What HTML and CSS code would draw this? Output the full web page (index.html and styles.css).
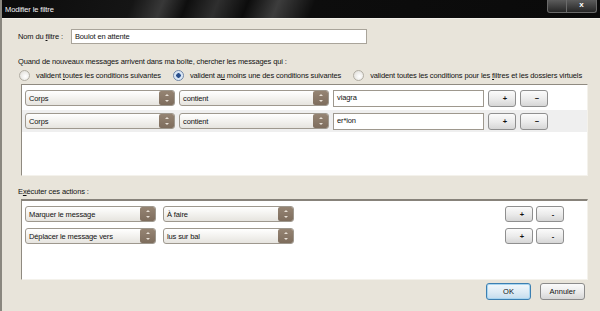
FILE: index.html
```html
<!DOCTYPE html>
<html lang="fr">
<head>
  <meta charset="UTF-8">
  <title>Modifier le filtre</title>
  <link rel="stylesheet" href="styles.css">
</head>
<body>
  <div class="window">
    <div class="titlebar">
      <span class="title">Modifier le filtre</span>
      <div class="winbuttons">
        <span class="winbtn"></span>
        <span class="winbtn close">x</span>
      </div>
    </div>

    <div class="content">
      <div class="name-row">
        <label class="label">Nom du <u>f</u>iltre :</label>
        <div class="textbox name">Boulot en attente</div>
      </div>

      <div class="intro">Quand de nouveaux messages arrivent dans ma boîte, chercher les messages qui :</div>

      <div class="radios">
        <span class="radio"><span class="dot"></span><span>valident <u>t</u>outes les conditions suivantes</span></span>
        <span class="radio"><span class="dot checked"></span><span>valident a<u>u</u> moins une des conditions suivantes</span></span>
        <span class="radio"><span class="dot"></span><span>valident toutes les conditions pour les <u>f</u>iltres et les dossiers virtuels</span></span>
      </div>

      <div class="list conditions">
        <div class="row">
          <div class="select w150"><span>Corps</span><i class="arrow"></i></div>
          <div class="select w150"><span>contient</span><i class="arrow"></i></div>
          <div class="textbox value">viagra</div>
          <button class="btn small">+</button>
          <button class="btn small">&minus;</button>
        </div>
        <div class="row selected">
          <div class="select w150"><span>Corps</span><i class="arrow"></i></div>
          <div class="select w150"><span>contient</span><i class="arrow"></i></div>
          <div class="textbox value">er*ion</div>
          <button class="btn small">+</button>
          <button class="btn small">&minus;</button>
        </div>
      </div>

      <div class="section-label">E<u>x</u>écuter ces actions :</div>

      <div class="list actions">
        <div class="row">
          <div class="select w131"><span>Marquer le message</span><i class="arrow"></i></div>
          <div class="select w131"><span>À faire</span><i class="arrow"></i></div>
          <span class="spacer"></span>
          <button class="btn small">+</button>
          <button class="btn small">-</button>
        </div>
        <div class="row">
          <div class="select w131"><span>Déplacer le message vers</span><i class="arrow"></i></div>
          <div class="select w131"><span>lus sur bal</span><i class="arrow"></i></div>
          <span class="spacer"></span>
          <button class="btn small">+</button>
          <button class="btn small">-</button>
        </div>
      </div>

      <div class="footer">
        <button class="btn dialog default">OK</button>
        <button class="btn dialog">Annuler</button>
      </div>
    </div>
  </div>
</body>
</html>
```

FILE: styles.css
```css
body {
  margin: 0;
  font-family: 'Liberation Sans', Arial, sans-serif;
  font-size: 7.5px;
  letter-spacing: -0.12px;
  color: #111;
}
u {
  text-decoration: underline;
}
.window {
  width: 600px;
  height: 311px;
  background-color: #e8e4da;
  box-sizing: border-box;
  border-left: 2px solid #8a877f;
  overflow: hidden;
}
.titlebar {
  height: 18px;
  display: flex;
  align-items: flex-start;
  justify-content: space-between;
  background: linear-gradient(112deg, #0b0b0b 0%, #151515 22%, #383838 27%, #0e0e0e 31%, #2f2f2f 36%, #0c0c0c 41%, #3d3d3d 46%, #0d0d0d 52%, #0a0a0a 100%);
  border-bottom: 1px solid #f2f0ea;
  margin-left: -2px;
}
.title {
  color: #f4f4f4;
  padding: 5px 0 0 5px;
}
.winbuttons {
  display: flex;
  margin-right: 3px;
}
.winbtn {
  width: 18px;
  height: 12px;
  border: 1px solid #6a6a6a;
  border-top: none;
  background: linear-gradient(#5c5c5c, #262626);
  color: #fff;
  font-size: 8px;
  font-weight: bold;
  text-align: center;
  line-height: 10px;
}
.winbtn:first-child {
  border-radius: 0 0 0 3px;
}
.winbtn.close {
  width: 29px;
  border-left: none;
  border-radius: 0 0 3px 0;
}
.content {
  padding: 0 13px 0 14px;
}
.name-row {
  display: flex;
  align-items: center;
  margin-top: 10px;
  gap: 8px;
  padding-left: 2px;
}
.textbox {
  background: #fff;
  border: 1px solid #a9a49a;
  box-sizing: border-box;
  padding: 2px 3px;
  height: 16px;
  line-height: 10px;
}
.textbox.name {
  width: 296px;
  height: 15px;
}
.intro {
  margin-top: 13px;
  padding-left: 2px;
}
.radios {
  display: flex;
  gap: 12px;
  margin-top: 4px;
  padding-left: 3px;
}
.radio {
  display: flex;
  align-items: center;
  gap: 6px;
  white-space: nowrap;
}
.dot {
  width: 9px;
  height: 9px;
  border-radius: 50%;
  border: 1px solid #b2aea4;
  background: radial-gradient(circle at 60% 60%, #fff, #dcdad4);
}
.dot.checked {
  border-color: #6f86a8;
  background: radial-gradient(circle, #2a4f8c 0 2px, #cfe0f2 2.5px, #f6f8fb);
}
.list {
  margin-left: 5px;
  width: 567px;
  background: #fff;
  border: 1px solid;
  border-color: #8f8a80 #f4f2ec #f4f2ec #8f8a80;
  box-sizing: border-box;
}
.conditions {
  height: 92px;
  margin-top: 3px;
  padding-top: 3px;
}
.actions {
  height: 81px;
  margin-top: 3px;
  padding-top: 4px;
  border-top: 2px solid #87827a;
}
.row {
  display: flex;
  align-items: center;
  gap: 4px;
  padding: 1px 3px 1px 3px;
  height: 18px;
}
.conditions .row + .row {
  margin-top: 2px;
  padding: 2px 3px;
}
.row.selected {
  background: #efefef;
}
.actions .row {
  gap: 7px;
  height: 16px;
}
.actions .row + .row {
  margin-top: 4px;
}
.select {
  height: 16px;
  box-sizing: border-box;
  display: flex;
  align-items: center;
  justify-content: space-between;
  border: 1px solid #9e988e;
  border-radius: 3px;
  background: linear-gradient(#ffffff, #f3f2ef 50%, #e6e4df);
  padding-left: 3px;
}
.w150 {
  width: 150px;
}
.w131 {
  width: 131px;
}
.arrow {
  width: 15px;
  height: 14px;
  border-radius: 2px;
  background: linear-gradient(#958473, #7e6d5d);
  position: relative;
}
.arrow::before,
.arrow::after {
  content: '';
  position: absolute;
  left: 6px;
  border-left: 2px solid transparent;
  border-right: 2px solid transparent;
}
.arrow::before {
  top: 3px;
  border-bottom: 2px solid #e8e0d6;
}
.arrow::after {
  bottom: 3px;
  border-top: 2px solid #e8e0d6;
}
.textbox.value {
  width: 151px;
  height: 17px;
  border-color: #9e988e;
}
.spacer {
  flex: 1;
}
.btn {
  font-family: 'Liberation Sans', Arial, sans-serif;
  font-size: 7.5px;
  color: #111;
  border: 1px solid #8f8f8f;
  border-radius: 3px;
  background: linear-gradient(#fbfbfb, #eaeaea 55%, #d6d6d6);
  padding: 0;
  box-sizing: border-box;
}
.btn.small {
  width: 28px;
  height: 16px;
  padding-left: 6px;
  font-weight: bold;
}
.conditions .btn.small {
  height: 17px;
}
.actions .btn.small {
  margin-left: -4px;
}
.actions .btn.small + .btn.small {
  margin-right: 20px;
}
.section-label {
  margin-top: 11px;
  padding-left: 2px;
}
.footer {
  display: flex;
  justify-content: flex-end;
  gap: 9px;
  margin-top: 3px;
  padding-right: 2px;
}
.btn.dialog {
  width: 45px;
  height: 17px;
  border-color: #8b8b8b;
}
.btn.default {
  border: 1px solid #3c7fb1;
  box-shadow: inset 0 0 0 1px #a8d5f0;
  background: linear-gradient(#f2f7fb, #dcebf5 55%, #c4dced);
}
```
